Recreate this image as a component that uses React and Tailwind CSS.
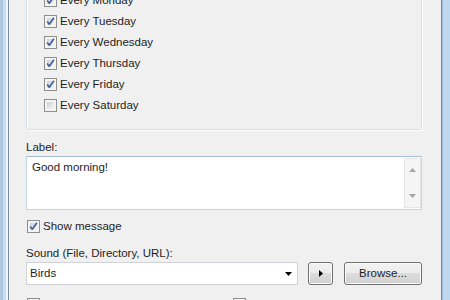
import React from 'react'

const font = { fontFamily: '"Liberation Sans", Arial, sans-serif' }

function Check({ checked }) {
  return (
    <span className="relative flex-none w-[13px] h-[13px] border border-[#8e8f8f] bg-[#f4f4f4] p-[2px]">
      <span className="block w-full h-full bg-[linear-gradient(135deg,#cdd1d6,#f4f5f6)]" />
      {checked && (
        <svg className="absolute inset-0" width="11" height="11" viewBox="0 0 11 11">
          <path d="M2.2 5.4L4.3 8.2L8.9 1.8" stroke="#3f5c9a" strokeWidth="1.6" fill="none" strokeLinejoin="round" />
        </svg>
      )}
    </span>
  )
}

function CheckRow({ checked, label }) {
  return (
    <div className="h-[21px] flex items-center gap-[3px]">
      <Check checked={checked} />
      <span className="leading-[15px]">{label}</span>
    </div>
  )
}

const days = [
  ['Every Monday', true],
  ['Every Tuesday', true],
  ['Every Wednesday', true],
  ['Every Thursday', true],
  ['Every Friday', true],
  ['Every Saturday', false],
]

const btn =
  'h-[23px] border border-[#707070] rounded-[3px] bg-[linear-gradient(#f3f3f3_0%,#ebebeb_50%,#dddddd_50%,#d0d0d0_100%)] shadow-[inset_0_0_0_1px_#fbfbfb] flex items-center justify-center'

export default function App() {
  return (
    <div
      className="w-[450px] h-[300px] overflow-hidden flex bg-[#f0f0f0] text-[11.5px] text-[#1e1e1e]"
      style={font}
    >
      {/* left frame */}
      <div className="w-[9px] flex-none bg-[linear-gradient(to_right,#b6cae0_0_1px,#a9c5e3_1px_3px,#cadcf0_3px_6px,#eef4fa_6px_8px,#7a8997_8px_9px)]" />

      {/* content */}
      <div className="flex-1 pl-[17px] pr-[19px]">
        {/* days group */}
        <div className="-mt-[31px] border border-[#d5dfe5] rounded-[3px] shadow-[1px_1px_0_#ffffff,inset_1px_1px_0_#ffffff] pt-[20px] pb-[13px] pl-[17px]">
          {days.map(([d, c]) => (
            <CheckRow key={d} checked={c} label={d} />
          ))}
        </div>

        <div className="mt-[10px] leading-[15px]">Label:</div>
        <div className="mt-[1px] h-[54px] bg-white border border-[#c3d6e9] border-t-[#a6bdd5] flex">
          <div className="flex-1 pl-[5px] pt-[3px] leading-[15px]">Good morning!</div>
          <div className="w-[17px] my-[1px] bg-[#f5f5f5] border border-[#e6e6e6] flex flex-col items-center justify-between py-[9px]">
            <svg width="7" height="4" viewBox="0 0 7 4">
              <path d="M0 4L3.5 0L7 4Z" fill="#a6a6a6" />
            </svg>
            <svg width="7" height="4" viewBox="0 0 7 4">
              <path d="M0 0L7 0L3.5 4Z" fill="#a6a6a6" />
            </svg>
          </div>
        </div>

        <div className="mt-[6px] pl-[1px]">
          <CheckRow checked label="Show message" />
        </div>

        <div className="mt-[9px] leading-[15px]">Sound (File, Directory, URL):</div>
        <div className="mt-[1px] flex items-center">
          <div className="w-[272px] h-[23px] bg-white border border-[#cfd3d8] flex items-center pl-[3px] pr-[5px]">
            <span className="flex-1 leading-[15px]">Birds</span>
            <svg width="7" height="4" viewBox="0 0 7 4">
              <path d="M0 0L7 0L3.5 4Z" fill="#000000" />
            </svg>
          </div>
          <div className={`ml-[10px] w-[25px] ${btn}`}>
            <svg width="4" height="7" viewBox="0 0 4 7">
              <path d="M0 0L4 3.5L0 7Z" fill="#000000" />
            </svg>
          </div>
          <div className={`ml-[11px] flex-1 ${btn}`}>
            <span className="leading-[15px]">Browse...</span>
          </div>
        </div>

        <div className="mt-[9px] flex pl-[1px]">
          <div className="w-[206px]">
            <CheckRow checked={false} label="Repeat sound" />
          </div>
          <CheckRow checked={false} label="Close after playing" />
        </div>
      </div>

      {/* right frame */}
      <div className="w-[9px] flex-none bg-[linear-gradient(to_right,#7a8997_0_1px,#a7c0d9_1px_2px,#bfd8f2_2px_9px)]" />
    </div>
  )
}
